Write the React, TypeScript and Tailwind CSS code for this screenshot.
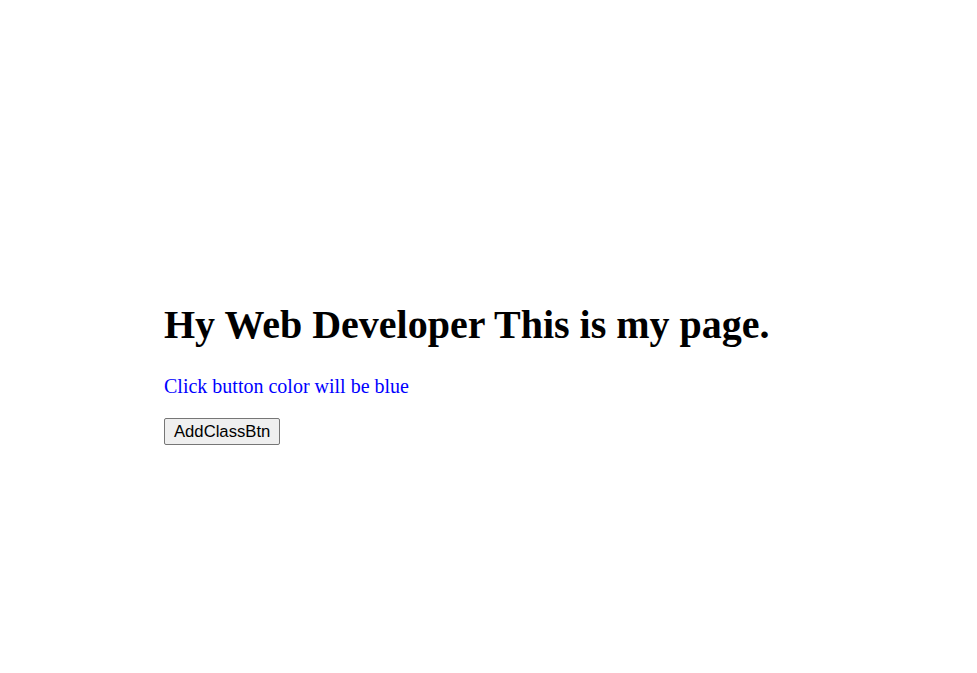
export default function App() {
  return (
    <div className="min-h-screen bg-white pt-[302px] pl-[164px]" style={{ fontFamily: '"Liberation Serif", "Times New Roman", serif' }}>
      <h1 className="m-0 mb-[27px] text-[40px] font-bold leading-[46px] text-black">
        Hy Web Developer This is my page.
      </h1>
      <p className="m-0 mb-[20px] text-[20px] leading-[23px] text-[#0000ff]">
        Click button color will be blue
      </p>
      <button
        className="h-[27px] w-[116px] rounded-[2px] border border-[#767676] bg-[#efefef] px-[9px] text-[16.67px] leading-[19px] text-black"
        style={{ fontFamily: '"Liberation Sans", Arial, sans-serif' }}
      >
        AddClassBtn
      </button>
    </div>
  );
}
